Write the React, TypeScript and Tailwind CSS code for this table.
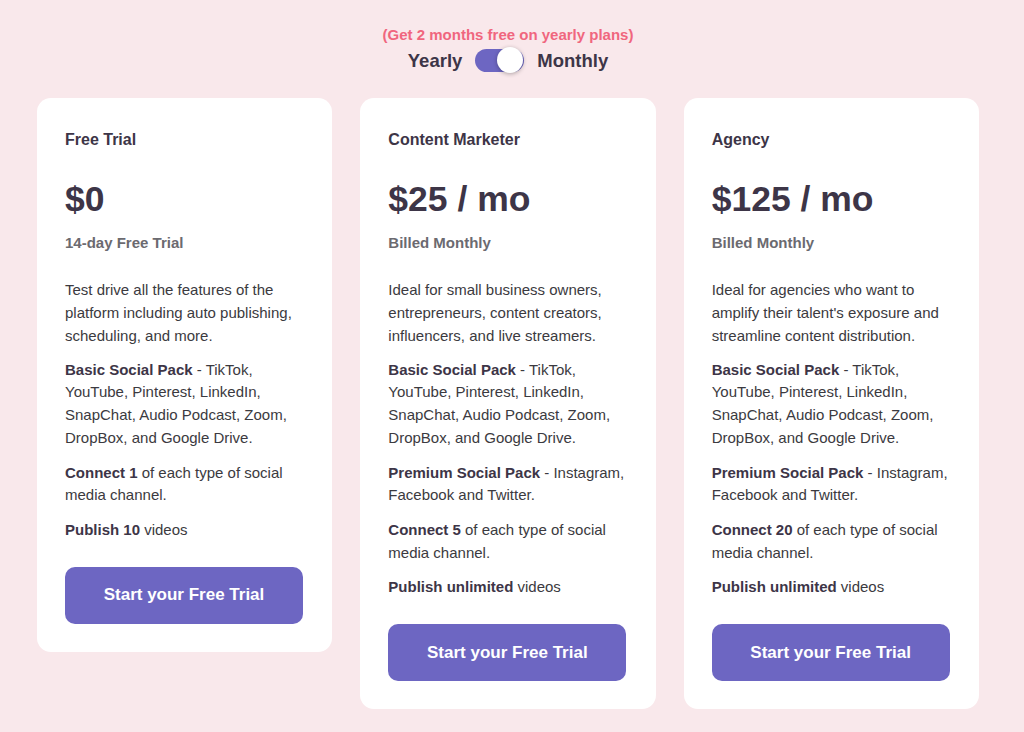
import React from 'react'

type Plan = {
  name: string
  price: string
  billing: string
  description: string
  features: React.ReactNode[]
}

const basicPack = (
  <>
    <b className="font-bold text-[#3d3547]">Basic Social Pack</b> - TikTok, YouTube, Pinterest, LinkedIn, SnapChat, Audio
    Podcast, Zoom, DropBox, and Google Drive.
  </>
)

const premiumPack = (
  <>
    <b className="font-bold text-[#3d3547]">Premium Social Pack</b> - Instagram, Facebook and Twitter.
  </>
)

const plans: Plan[] = [
  {
    name: 'Free Trial',
    price: '$0',
    billing: '14-day Free Trial',
    description: 'Test drive all the features of the platform including auto publishing, scheduling, and more.',
    features: [
      basicPack,
      <>
        <b className="font-bold text-[#3d3547]">Connect 1</b> of each type of social media channel.
      </>,
      <>
        <b className="font-bold text-[#3d3547]">Publish 10</b> videos
      </>,
    ],
  },
  {
    name: 'Content Marketer',
    price: '$25 / mo',
    billing: 'Billed Monthly',
    description: 'Ideal for small business owners, entrepreneurs, content creators, influencers, and live streamers.',
    features: [
      basicPack,
      premiumPack,
      <>
        <b className="font-bold text-[#3d3547]">Connect 5</b> of each type of social media channel.
      </>,
      <>
        <b className="font-bold text-[#3d3547]">Publish unlimited</b> videos
      </>,
    ],
  },
  {
    name: 'Agency',
    price: '$125 / mo',
    billing: 'Billed Monthly',
    description: "Ideal for agencies who want to amplify their talent's exposure and streamline content distribution.",
    features: [
      basicPack,
      premiumPack,
      <>
        <b className="font-bold text-[#3d3547]">Connect 20</b> of each type of social media channel.
      </>,
      <>
        <b className="font-bold text-[#3d3547]">Publish unlimited</b> videos
      </>,
    ],
  },
]

function PlanCard({ plan }: { plan: Plan }) {
  return (
    <div className="bg-white rounded-[14px] pt-[30px] pb-[28px] px-[28px] text-[#3b3a40]">
      <h3 className="text-[16px] leading-[24px] font-bold text-[#3d3547]">{plan.name}</h3>
      <div className="mt-[27px] text-[35.5px] leading-[40px] font-bold text-[#3d3547]">{plan.price}</div>
      <div className="mt-[13px] text-[15px] leading-[22px] font-bold text-[#6b6a70]">{plan.billing}</div>
      <p className="mt-[24px] text-[15px] leading-[23px]">{plan.description}</p>
      {plan.features.map((f, i) => (
        <p key={i} className="mt-[12px] text-[15px] leading-[22.7px]">
          {f}
        </p>
      ))}
      <button className="mt-[25px] w-[238px] h-[57px] rounded-[10px] bg-[#6d66c2] text-white text-[17px] font-bold">
        Start your Free Trial
      </button>
    </div>
  )
}

export default function App() {
  return (
    <div
      className="min-h-[732px] bg-[#f9e8eb] pt-[26px]"
      style={{ fontFamily: '"Liberation Sans", Arial, sans-serif' }}
    >
      <div className="w-[942px] ml-[37px]">
        <div className="text-center text-[15px] leading-[18px] font-bold text-[#f0667e]">
          (Get 2 months free on yearly plans)
        </div>
        <div className="mt-[3px] flex items-center justify-center gap-[13px]">
          <span className="text-[18.5px] font-bold text-[#3d3547]">Yearly</span>
          <div className="relative w-[49px] h-[23px] rounded-full bg-[#6d66c2]">
            <div className="absolute right-[1px] top-[-2px] w-[26px] h-[26px] rounded-full bg-white shadow-[0_1px_4px_rgba(0,0,0,0.3)]" />
          </div>
          <span className="text-[18.5px] font-bold text-[#3d3547]">Monthly</span>
        </div>
        <div className="mt-[23px] grid grid-cols-3 gap-[28px] items-start">
          {plans.map((p) => (
            <PlanCard key={p.name} plan={p} />
          ))}
        </div>
      </div>
    </div>
  )
}
